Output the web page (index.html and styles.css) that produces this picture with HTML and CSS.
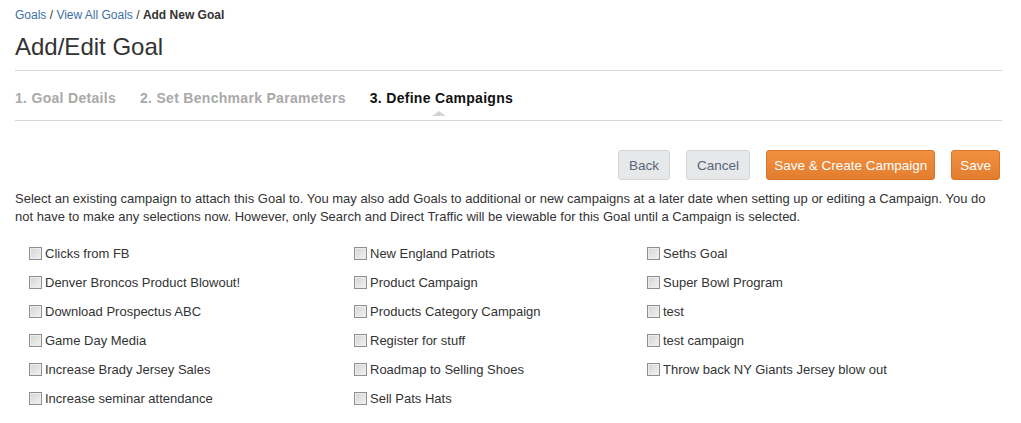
FILE: index.html
```html
<!DOCTYPE html>
<html>
<head>
<meta charset="utf-8">
<link rel="stylesheet" href="styles.css">
</head>
<body>
<div class="page">
  <div class="crumbs"><a href="#">Goals</a> / <a href="#">View All Goals</a> / <b>Add New Goal</b></div>
  <h1 class="title">Add/Edit Goal</h1>
  <div class="tabs">
    <span class="tab">1. Goal Details</span>
    <span class="tab">2. Set Benchmark Parameters</span>
    <span class="tab active">3. Define Campaigns</span>
  </div>
  <div class="actions">
    <button class="btn btn-gray">Back</button>
    <button class="btn btn-gray">Cancel</button>
    <button class="btn btn-orange btn-wide">Save &amp; Create Campaign</button>
    <button class="btn btn-orange btn-save">Save</button>
  </div>
  <p class="intro">Select an existing campaign to attach this Goal to. You may also add Goals to additional or new campaigns at a later date when setting up or editing a Campaign. You do not have to make any selections now. However, only Search and Direct Traffic will be viewable for this Goal until a Campaign is selected.</p>
  <div class="grid">
    <div class="col">
      <label class="item"><input type="checkbox"><span>Clicks from FB</span></label>
      <label class="item"><input type="checkbox"><span>Denver Broncos Product Blowout!</span></label>
      <label class="item"><input type="checkbox"><span>Download Prospectus ABC</span></label>
      <label class="item"><input type="checkbox"><span>Game Day Media</span></label>
      <label class="item"><input type="checkbox"><span>Increase Brady Jersey Sales</span></label>
      <label class="item"><input type="checkbox"><span>Increase seminar attendance</span></label>
    </div>
    <div class="col">
      <label class="item"><input type="checkbox"><span>New England Patriots</span></label>
      <label class="item"><input type="checkbox"><span>Product Campaign</span></label>
      <label class="item"><input type="checkbox"><span>Products Category Campaign</span></label>
      <label class="item"><input type="checkbox"><span>Register for stuff</span></label>
      <label class="item"><input type="checkbox"><span>Roadmap to Selling Shoes</span></label>
      <label class="item"><input type="checkbox"><span>Sell Pats Hats</span></label>
    </div>
    <div class="col">
      <label class="item"><input type="checkbox"><span>Seths Goal</span></label>
      <label class="item"><input type="checkbox"><span>Super Bowl Program</span></label>
      <label class="item"><input type="checkbox"><span>test</span></label>
      <label class="item"><input type="checkbox"><span>test campaign</span></label>
      <label class="item"><input type="checkbox"><span>Throw back NY Giants Jersey blow out</span></label>
    </div>
  </div>
</div>
</body>
</html>
```

FILE: styles.css
```css
html, body {
  margin: 0;
  padding: 0;
  background: #ffffff;
}
body {
  font-family: "Liberation Sans", Arial, sans-serif;
  color: #333333;
}
.page {
  padding: 0 19px 0 15px;
}
.crumbs {
  margin-top: 8px;
  font-size: 12px;
  line-height: 15px;
  color: #333;
}
.crumbs a {
  color: #3e6fa8;
  text-decoration: none;
}
.crumbs b {
  color: #333;
}
.title {
  margin: 10px 0 0 0;
  font-size: 24px;
  line-height: 28px;
  font-weight: normal;
  color: #333;
  padding-bottom: 9px;
  border-bottom: 1px solid #d6d6d6;
}
.tabs {
  display: flex;
  gap: 24px;
  padding: 17px 0 12px 0;
  border-bottom: 1px solid #d6d6d6;
  font-size: 14px;
  line-height: 20px;
  font-weight: bold;
  letter-spacing: 0.3px;
}
.tab {
  color: #a9a9a9;
  position: relative;
}
.tab.active {
  color: #111;
}
.tab.active::after {
  content: "";
  position: absolute;
  left: 50%;
  margin-left: -9px;
  bottom: -8px;
  width: 0;
  height: 0;
  border-left: 7px solid transparent;
  border-right: 7px solid transparent;
  border-bottom: 5px solid #d4d4d4;
}
.actions {
  display: flex;
  justify-content: flex-end;
  gap: 16px;
  margin-top: 29px;
  margin-right: 2px;
}
.btn {
  height: 30px;
  padding: 0 10px;
  font-family: "Liberation Sans", Arial, sans-serif;
  font-size: 13.5px;
  border-radius: 3px;
  cursor: pointer;
}
.btn-gray {
  background: #e7e8ea;
  border: 1px solid #d3d5d8;
  color: #5a6577;
}
.btn-orange {
  background: linear-gradient(#f39141, #e27d2e);
  border: 1px solid #d7742a;
  color: #ffffff;
}
.btn-wide {
  padding: 0 7px;
}
.btn-save {
  padding: 0 8px;
}
.intro {
  margin: 10px 0 0 0;
  font-size: 13px;
  line-height: 18px;
  color: #333;
}
.grid {
  display: grid;
  grid-template-columns: 325px 293px auto;
  padding-left: 14px;
  margin-top: 13px;
}
.col {
  display: flex;
  flex-direction: column;
}
.item {
  display: flex;
  align-items: center;
  height: 29px;
  font-size: 13px;
  color: #333;
}
.item input {
  appearance: none;
  -webkit-appearance: none;
  margin: 0 3px 0 0;
  width: 13px;
  height: 13px;
  border: 1px solid #8f8f8f;
  background: linear-gradient(135deg, #d4d4d4, #f2f2f2);
  box-shadow: inset 0 0 0 1px #ececec;
  flex: none;
}
```
